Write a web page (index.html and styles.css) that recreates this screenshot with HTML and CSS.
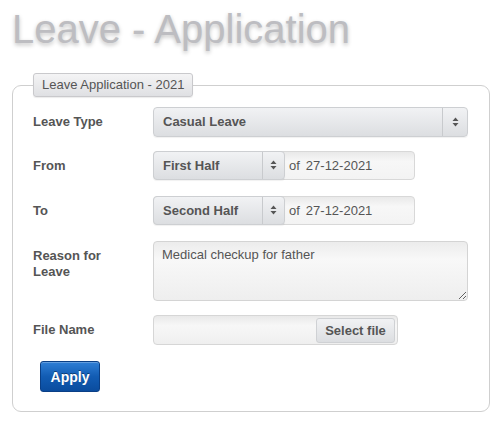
FILE: index.html
```html
<!DOCTYPE html>
<html>
<head>
<meta charset="utf-8">
<link rel="stylesheet" href="styles.css">
</head>
<body>
<h1 class="title">Leave - Application</h1>
<fieldset class="panel">
  <legend class="legend">Leave Application - 2021</legend>
  <div class="row row-gap-14">
    <div class="label">Leave Type</div>
    <div class="select select-wide">
      <span class="select-text">Casual Leave</span>
      <span class="select-arrow"><svg width="7" height="10" viewBox="0 0 7 10"><path d="M3.5 0.5 L6.5 4 H0.5 Z M3.5 9.5 L6.5 6 H0.5 Z" fill="#555"/></svg></span>
    </div>
  </div>
  <div class="row row-gap-16">
    <div class="label">From</div>
    <div class="datebox">
      <div class="select select-half">
        <span class="select-text">First Half</span>
        <span class="select-arrow"><svg width="7" height="10" viewBox="0 0 7 10"><path d="M3.5 0.5 L6.5 4 H0.5 Z M3.5 9.5 L6.5 6 H0.5 Z" fill="#555"/></svg></span>
      </div>
      <span class="of">of</span><span class="date">27-12-2021</span>
    </div>
  </div>
  <div class="row row-gap-16">
    <div class="label">To</div>
    <div class="datebox">
      <div class="select select-half">
        <span class="select-text">Second Half</span>
        <span class="select-arrow"><svg width="7" height="10" viewBox="0 0 7 10"><path d="M3.5 0.5 L6.5 4 H0.5 Z M3.5 9.5 L6.5 6 H0.5 Z" fill="#555"/></svg></span>
      </div>
      <span class="of">of</span><span class="date">27-12-2021</span>
    </div>
  </div>
  <div class="row row-gap-14">
    <div class="label">Reason for Leave</div>
    <textarea class="reason">Medical checkup for father</textarea>
  </div>
  <div class="row row-gap-16">
    <div class="label">File Name</div>
    <div class="filebox">
      <span class="filename"></span>
      <span class="filebtn">Select file</span>
    </div>
  </div>
  <div class="actions">
    <button class="apply">Apply</button>
  </div>
</fieldset>
</body>
</html>
```
FILE: styles.css
```css
html, body {
  margin: 0;
  padding: 0;
  background: #fff;
}
body {
  font-family: "Liberation Sans", Arial, sans-serif;
  color: #555;
  width: 504px;
  height: 426px;
  overflow: hidden;
}
.title {
  margin: 0 0 0 12px;
  padding-top: 6px;
  font-size: 40px;
  line-height: 46px;
  font-weight: normal;
  color: #bdbdc1;
  text-shadow: 0 2px 4px rgba(0,0,0,0.25);
}
.panel {
  margin: 21px 0 0 12px;
  width: 478px;
  box-sizing: border-box;
  border: 1px solid #cfcfcf;
  border-radius: 9px;
  padding: 10px 20px 19px 20px;
  min-width: 0;
}
.legend {
  padding: 0 8px;
  height: 24px;
  box-sizing: border-box;
  line-height: 22px;
  font-size: 13px;
  color: #555;
  background: linear-gradient(#f4f4f5, #dfe0e3);
  border: 1px solid #c9c9cc;
  border-radius: 3px;
  box-shadow: 0 1px 1px rgba(0,0,0,0.08);
}
.row {
  display: flex;
  align-items: flex-start;
}
.row-gap-14 { margin-bottom: 14px; }
.row-gap-16 { margin-bottom: 16px; }
.label {
  width: 100px;
  margin-right: 20px;
  font-size: 13px;
  font-weight: bold;
  line-height: 16px;
  padding-top: 7px;
  color: #555;
}
.select {
  display: flex;
  align-items: stretch;
  height: 30px;
  box-sizing: border-box;
  border: 1px solid #cdcfd2;
  border-radius: 4px;
  background: linear-gradient(#f1f2f4, #dcdee1);
  box-shadow: 0 1px 1px rgba(0,0,0,0.06);
}
.select-wide { width: 315px; }
.select-text {
  flex: 1;
  padding-left: 9px;
  font-size: 13px;
  font-weight: bold;
  line-height: 28px;
  color: #555;
}
.select-arrow {
  width: 24px;
  border-left: 1px solid #c8cacd;
  display: flex;
  align-items: center;
  justify-content: center;
}
.datebox {
  display: flex;
  align-items: center;
  width: 262px;
  height: 29px;
  box-sizing: border-box;
  border: 1px solid #d8d8d8;
  border-radius: 4px;
  background: linear-gradient(#e9e9e9, #f7f7f7 35%, #f3f3f3);
}
.datebox .select {
  height: 29px;
  margin: -1px 0 0 -1px;
}
.select-half { width: 132px; }
.select-half .select-arrow { width: 21px; }
.of {
  margin-left: 4px;
  font-size: 13px;
  color: #555;
}
.date {
  margin-left: 6px;
  font-size: 13px;
  color: #555;
}
.reason {
  width: 315px;
  height: 60px;
  box-sizing: border-box;
  margin: 0;
  padding: 5px 8px;
  font-family: "Liberation Sans", Arial, sans-serif;
  font-size: 13px;
  color: #555;
  border: 1px solid #d4d4d4;
  border-radius: 4px;
  background: linear-gradient(#ececec, #f8f8f8 30%, #eeeeee);
  outline: none;
}
.filebox {
  display: flex;
  align-items: center;
  justify-content: flex-end;
  width: 245px;
  height: 30px;
  box-sizing: border-box;
  border: 1px solid #d6d6d6;
  border-radius: 4px;
  background: linear-gradient(#e9e9e9, #f7f7f7 35%, #efefef);
  padding-right: 2px;
}
.filename { flex: 1; }
.filebtn {
  width: 79px;
  height: 25px;
  box-sizing: border-box;
  border: 1px solid #cfd1d4;
  border-radius: 3px;
  background: linear-gradient(#f1f2f4, #dcdee1);
  font-size: 13px;
  font-weight: bold;
  line-height: 23px;
  text-align: center;
  color: #555;
}
.actions {
  padding-left: 7px;
}
.apply {
  width: 60px;
  height: 31px;
  margin: 0;
  padding: 0;
  border: 1px solid #0a3f86;
  border-radius: 3px;
  background: linear-gradient(#2f7fd6, #125cb3 50%, #0a4c9e);
  color: #fff;
  font-family: "Liberation Sans", Arial, sans-serif;
  font-size: 14px;
  font-weight: bold;
  text-shadow: 0 -1px 0 rgba(0,0,0,0.4);
  box-shadow: inset 0 1px 0 rgba(255,255,255,0.25);
}
```
